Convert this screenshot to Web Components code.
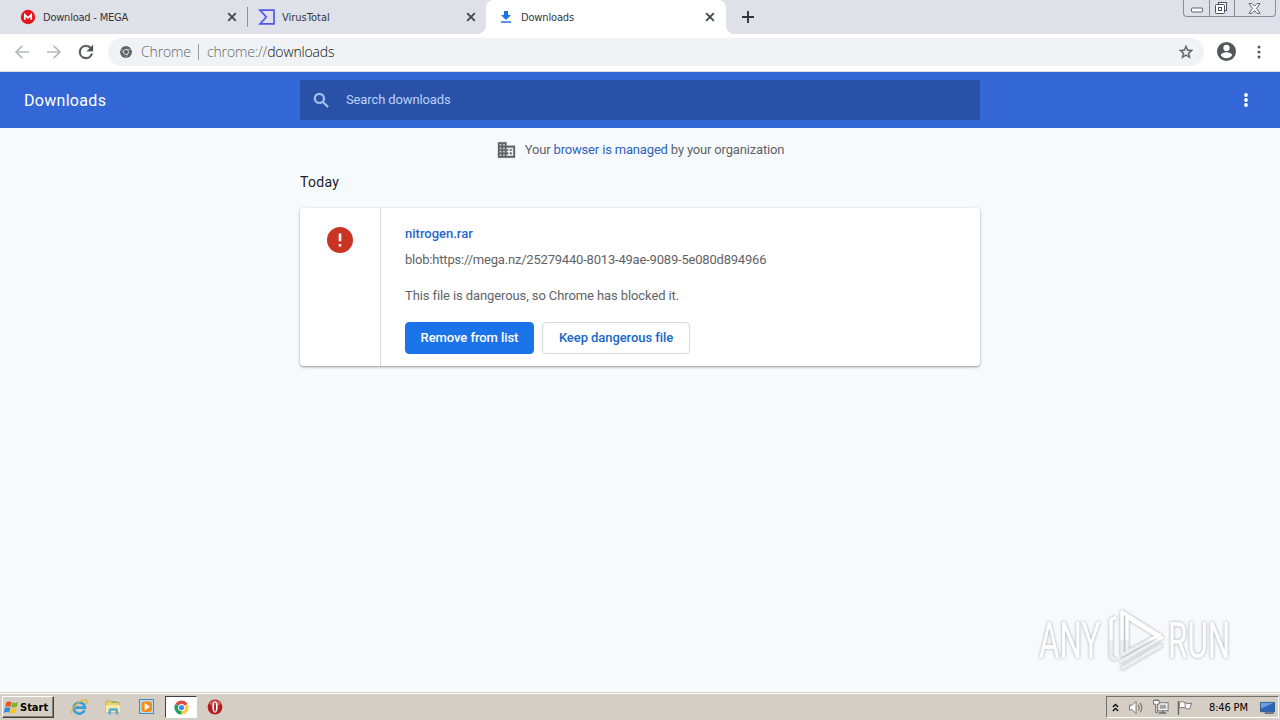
<!DOCTYPE html>
<html lang="en">
<head>
<meta charset="utf-8">
<title>Downloads</title>
<style>
  html, body { margin: 0; height: 100%; overflow: hidden; }
  body { font-family: Roboto, "Liberation Sans", sans-serif; font-size: 13px; }
</style>
</head>
<body>
<desktop-screen></desktop-screen>
<script>
// shared helper: open shadow root with markup
function define(name, html) {
  customElements.define(name, class extends HTMLElement {
    constructor() {
      super();
      this.attachShadow({ mode: "open" }).innerHTML = html;
    }
  });
}

const chromeLogo = (a, b, c, d, ring) => `
  <path d="M8 8 1.5 4.2A7.5 7.5 0 0 1 14.5 4.2Z" fill="${a}"/>
  <path d="M8 8 14.5 4.2A7.5 7.5 0 0 1 8 15.5Z" fill="${b}"/>
  <path d="M8 8V15.5A7.5 7.5 0 0 1 1.5 4.2Z" fill="${c}"/>
  <circle cx="8" cy="8" r="3.8" fill="${ring}"/>
  <circle cx="8" cy="8" r="2.8" fill="${d}"/>`;

const icons = {
  mega: ["0 0 16 16", `<circle cx="8" cy="8" r="7.2" fill="#e3141e"/><path d="M4.8 10.7V5.8L8 8.8l3.2-3v4.9" fill="none" stroke="#fff" stroke-width="1.7"/>`],
  virustotal: ["0 0 16 16", `<path d="M1 1.2H15V14.8H1L7.3 8Z" fill="none" stroke="#5057ee" stroke-width="1.7"/>`],
  download: ["0 0 10 12", `<path d="M3 0h4v4h3L5 8.9 0 4h3ZM0 10.3h10v1.5H0Z" fill="#1a73e8"/>`],
  close: ["0 0 10 10", `<path d="m1.2 1.2 7.6 7.6M8.8 1.2 1.2 8.8" stroke="#45494e" stroke-width="1.9"/>`],
  plus: ["0 0 12 12", `<path d="M6 0v12M0 6h12" stroke="#33363a" stroke-width="1.9"/>`],
  back: ["0 0 14 14", `<path d="M14 7H1.3M7.3.8 1.1 7l6.2 6.2" fill="none" stroke="#b6b8bb" stroke-width="1.7"/>`],
  forward: ["0 0 14 14", `<path d="M0 7h12.7M6.7.8 12.9 7l-6.2 6.2" fill="none" stroke="#b6b8bb" stroke-width="1.7"/>`],
  reload: ["4 4 16 16", `<path d="M17.65 6.35A7.96 7.96 0 0 0 12 4a8 8 0 1 0 7.73 10h-2.08A6 6 0 1 1 12 6c1.66 0 3.14.69 4.22 1.78L13 11h7V4l-2.35 2.35z" fill="#505357" stroke="#505357" stroke-width=".4"/>`],
  chromeGray: ["0 0 16 16", `<circle cx="8" cy="8" r="7.9" fill="#5f6368"/><circle cx="8" cy="8" r="3.4" fill="none" stroke="#f1f3f4" stroke-width="1"/><path d="M8 4.5h6.8M4.9 9.6 1.6 4M11.1 9.6 7.7 15.5" stroke="#f1f3f4" stroke-width=".7"/>`],
  star: ["2 2 20 20", `<path d="m22 9.24-7.19-.62L12 2 9.19 8.63 2 9.24l5.46 4.73L5.82 21 12 17.27 18.18 21l-1.63-7.03L22 9.24zM12 15.4l-3.76 2.27 1-4.28-3.32-2.88 4.38-.38L12 6.1l1.71 4.04 4.38.38-3.32 2.88 1 4.28L12 15.4z" fill="#5f6368" stroke="#5f6368" stroke-width=".6"/>`],
  person: ["2 2 20 20", `<path d="M12 2a10 10 0 1 0 0 20 10 10 0 0 0 0-20zm0 3a3.3 3.3 0 1 1 0 6.6A3.3 3.3 0 0 1 12 5zm0 14.2a7.2 7.2 0 0 1-6-3.22c.03-1.99 4-3.08 6-3.08s5.97 1.09 6 3.08a7.2 7.2 0 0 1-6 3.22z" fill="#53565a"/>`],
  dots: ["0 0 4 14", `<circle cx="2" cy="2" r="1.5"/><circle cx="2" cy="7" r="1.5"/><circle cx="2" cy="12" r="1.5"/>`],
  dotsBold: ["0 0 4 14", `<circle cx="2" cy="2" r="1.9"/><circle cx="2" cy="7" r="1.9"/><circle cx="2" cy="12" r="1.9"/>`],
  search: ["3 3 18 18", `<path d="M15.5 14h-.79l-.28-.27A6.47 6.47 0 0 0 16 9.5 6.5 6.5 0 1 0 9.5 16c1.61 0 3.09-.59 4.23-1.57l.27.28v.79l5 4.99L20.49 19l-4.99-5zm-6 0a4.5 4.5 0 1 1 0-9 4.5 4.5 0 0 1 0 9z" fill="#b3cdf7" stroke="#b3cdf7" stroke-width=".4"/>`],
  building: ["2 3 20 18", `<path d="M12 7V3H2v18h20V7H12zM6 19H4v-2h2v2zm0-4H4v-2h2v2zm0-4H4V9h2v2zm0-4H4V5h2v2zm4 12H8v-2h2v2zm0-4H8v-2h2v2zm0-4H8V9h2v2zm0-4H8V5h2v2zm10 12h-8v-2h2v-2h-2v-2h2v-2h-2V9h8v10zm-2-8h-2v2h2v-2zm0 4h-2v2h2v-2z" fill="#5f6368" stroke="#5f6368" stroke-width=".4"/>`],
  danger: ["2 2 20 20", `<path d="M12 2a10 10 0 1 0 0 20 10 10 0 0 0 0-20zm1 15h-2v-2h2v2zm0-4h-2V7h2v6z" fill="#c93424"/>`],
  minimize: ["0 0 14 6", `<rect x="1.5" y="1" width="11" height="4" rx="1" fill="#fff" stroke="#5c616c"/>`],
  restore: ["0 0 14 14", `<path d="M4.5 3.5v-2h8v8h-2" fill="#fff" stroke="#4d525d" stroke-width="1.1"/><rect x="1.5" y="3.5" width="9" height="9" rx="1" fill="#fff" stroke="#4d525d"/><rect x="4.5" y="6.5" width="3" height="3" fill="none" stroke="#4d525d"/>`],
  winClose: ["0 0 13 11", `<path d="M1 .6h3l2.5 2.6L9 .6h3L8.5 5.4 12 10.4H9L6.5 7.6 4 10.4H1L4.5 5.4Z" fill="#fff" stroke="#5c616c"/>`],
  windows: ["0 0 16 16", `<path d="M2.5 2.5Q5 .6 8.2 2.2L7 7.3Q4 6 1.2 7.6Z" fill="#e85523"/><path d="M9 2.5q3 1.4 6-.3l-1.3 5q-3 1.6-5.9.3Z" fill="#77b829"/><path d="M1 8.5q3-1.5 5.8-.2l-1.3 5Q2.5 12-.3 13.7Z" fill="#328dd8"/><path d="M7.6 8.6q3 1.3 5.9-.2l-1.3 5q-3 1.6-5.9.3Z" fill="#f8c51c"/>`],
  ie: ["0 0 18 18", `<path d="M14.6 12A5.6 5.6 0 1 1 14.9 9.6H5" fill="none" stroke="#36a0dc" stroke-width="2.6"/><path d="M2 16C-1.5 13.5 9.5 1 15.8 2c1.6.4 1.3 2.5.2 4.3" fill="none" stroke="#e9b62d" stroke-width="1.3"/>`],
  folder: ["0 0 18 18", `<path d="M2 3h5l1 1.5h7.5V14H2Z" fill="#ead06f" stroke="#c3a23d" stroke-width=".7"/><path d="M2 7.2h14V14H2Z" fill="#f8eba7"/><path d="M4.5 16.5V12q0-1.8 1.8-1.8h6q1.8 0 1.8 1.8v4.5h-2.6v-3.8H7.1v3.8Z" fill="#55acd8"/><path d="M8 4h5" stroke="#5dae5c"/>`],
  media: ["0 0 18 18", `<rect x="1.5" y="1.5" width="14" height="14" fill="#b9dbf3" stroke="#4b88ba"/><rect x="3.5" y="3.5" width="10.5" height="10.5" rx="3" fill="#f28d16"/><path d="M6.7 5v7.5l5.4-3.7Z" fill="#fff"/>`],
  chrome: ["0 0 16 16", chromeLogo("#dd4b3e", "#fdcd40", "#1ea260", "#4688f1", "#fff")],
  opera: ["0 0 16 16", `<circle cx="8" cy="8" r="7.4" fill="#b31c20"/><path d="M2 5a7 7 0 0 1 12 0Q8 8 2 5" fill="#d56260"/><ellipse cx="8" cy="8" rx="2.7" ry="5.8" fill="#fff"/><ellipse cx="8" cy="8" rx="1" ry="4.8" fill="#a92a2b"/>`],
  chevrons: ["0 0 8 10", `<path d="m1 4.5 3-3 3 3M1 9l3-3 3 3" fill="none" stroke="#000" stroke-width="1.5"/>`],
  volume: ["0 0 18 16", `<path d="M1.5 5.5h3l4-4v13l-4-4h-3Z" fill="#fff" stroke="#74726e"/><path d="M11 5q2 3 0 6M13 3q3.4 5 0 10" fill="none" stroke="#777571" stroke-width="1.2"/>`],
  network: ["0 0 17 17", `<rect x="5" y="4" width="11" height="8.5" fill="#fff" stroke="#6c6a66"/><rect x="7" y="6" width="7" height="4.5" fill="#a5a5a2"/><path d="M6 14.8h8M10.5 12.5v2" stroke="#6c6a66" stroke-width="1.5"/><path d="M.5 1.5h6v4h-2v9H2.8v-9H.5ZM2.2 0v2M4.8 0v2" fill="#fff" stroke="#6c6a66"/>`],
  flag: ["0 0 17 16", `<path d="M1.5 1v15" stroke="#6c6a66" stroke-width="1.5"/><path d="M2.5 2.2Q6 .8 8.7 3q3 1.8 6.8.3l-1.8 6Q11 10.2 8.2 8.3 5.3 7.2 2.5 9Z" fill="#fff" stroke="#74726e"/><path d="M8.7 3v5.3" stroke="#74726e"/>`],
  desktop: ["0 0 16 14", `<path d="M.5 1.5h15v10H.5Z" fill="#2866bd" stroke="#315683"/><path d="M1 2h14L1 8Z" fill="#679fdf"/><path d="M5 13h10" stroke="#405b7b" stroke-width="1.5"/>`],
};

class UiIcon extends HTMLElement {
  constructor() {
    super();
    this.attachShadow({ mode: "open" });
  }

  connectedCallback() {
    const [viewBox, body] = icons[this.getAttribute("name")];
    const width = this.getAttribute("w");
    const height = this.getAttribute("h") || width;
    this.shadowRoot.innerHTML = `
      <style>
        :host { display: block; flex: none; }
        svg { display: block; fill: currentColor; overflow: visible; }
      </style>
      <svg width="${width}" height="${height}" viewBox="${viewBox}">${body}</svg>`;
  }
}
customElements.define("ui-icon", UiIcon);

define("browser-tab", `
  <style>
    :host {
      display: flex;
      align-items: center;
      box-sizing: border-box;
      height: 34px;
      color: #33363b;
      font: 11px "DejaVu Sans Condensed", "DejaVu Sans", sans-serif;
      letter-spacing: var(--track, -0.2px);
    }
    :host([active]) { background: #fff; border-radius: 8px 8px 0 0; position: relative; }
    :host([active])::before, :host([active])::after {
      content: "";
      position: absolute;
      bottom: 0;
      width: 8px;
      height: 8px;
    }
    :host([active])::before { left: -8px; background: radial-gradient(circle at 0 0, transparent 7.5px, #fff 8px); }
    :host([active])::after { right: -8px; background: radial-gradient(circle at 100% 0, transparent 7.5px, #fff 8px); }
    .title { flex: 1; white-space: nowrap; }
  </style>
  <slot name="icon"></slot>
  <span class="title"><slot></slot></span>
  <ui-icon name="close" w="10"></ui-icon>
`);

define("window-buttons", `
  <style>
    :host {
      display: grid;
      grid-template-columns: 25px 25px 41px;
      box-sizing: border-box;
      width: 93px;
      height: 17px;
      margin: 0 4px 0 auto;
      border: 1px solid #888d99;
      border-top: 0;
      border-radius: 0 0 4px 4px;
      align-self: flex-start;
    }
    div { display: grid; place-items: center; box-sizing: border-box; height: 16px; }
    div + div { border-left: 1px solid #888d99; }
    .min { align-items: end; padding-bottom: 3px; }
    .max, .close { padding-right: 2px; }
  </style>
  <div class="min"><ui-icon name="minimize" w="14" h="6"></ui-icon></div>
  <div class="max"><ui-icon name="restore" w="14"></ui-icon></div>
  <div class="close"><ui-icon name="winClose" w="13" h="11"></ui-icon></div>
`);

define("tab-strip", `
  <style>
    :host { display: flex; height: 34px; background: #dee1e8; }
    .sep { width: 1px; height: 20px; margin: 7px 0 0 10px; background: #8c8f95; }
    .first { width: 237px; padding-left: 20px; --track: -0.22px; }
    .second { width: 228px; padding-left: 11px; --track: 0; }
    .third { width: 240px; padding: 0 11px 0 15px; margin-left: 10px; --track: -0.15px; }
    .first ui-icon { margin-right: 7px; }
    .second ui-icon { margin-right: 7px; }
    .third ui-icon { margin-right: 10px; }
    .plus { margin: 11px 0 0 16px; }
  </style>
  <browser-tab class="first"><ui-icon slot="icon" name="mega" w="16"></ui-icon>Download - MEGA</browser-tab>
  <div class="sep"></div>
  <browser-tab class="second"><ui-icon slot="icon" name="virustotal" w="16"></ui-icon>VirusTotal</browser-tab>
  <browser-tab class="third" active><ui-icon slot="icon" name="download" w="10" h="12"></ui-icon>Downloads</browser-tab>
  <ui-icon class="plus" name="plus" w="12"></ui-icon>
  <window-buttons></window-buttons>
`);

define("browser-toolbar", `
  <style>
    :host {
      display: flex;
      align-items: center;
      box-sizing: border-box;
      height: 38px;
      padding: 0 19px 2px 15px;
      background: #fff;
      border-bottom: 1px solid #dcdfe3;
    }
    .forward { margin-left: 18px; }
    .reload { margin-left: 18px; }
    .omnibox {
      flex: 1;
      display: flex;
      align-items: center;
      box-sizing: border-box;
      height: 28px;
      margin-left: 15px;
      padding: 0 11px 0 12px;
      border-radius: 14px;
      background: #f0f3f5;
      color: #63676c;
      font: 14px "Open Sans", "Noto Sans", sans-serif;
      font-weight: 300;
      white-space: nowrap;
    }
    .name { margin-left: 9px; width: 57px; letter-spacing: -0.15px; }
    .bar { width: 1px; height: 16px; margin-right: 8px; background: #999da2; }
    .url { flex: 1; letter-spacing: -0.15px; }
    b { font-weight: 300; color: #111; }
    .person { margin: 0 21px 0 13px; }
    .dots { color: #55585c; }
  </style>
  <ui-icon name="back" w="14"></ui-icon>
  <ui-icon class="forward" name="forward" w="14"></ui-icon>
  <ui-icon class="reload" name="reload" w="14"></ui-icon>
  <div class="omnibox">
    <ui-icon name="chromeGray" w="12"></ui-icon>
    <span class="name">Chrome</span><span class="bar"></span>
    <span class="url">chrome://<b>downloads</b></span>
    <ui-icon name="star" w="14"></ui-icon>
  </div>
  <ui-icon class="person" name="person" w="19"></ui-icon>
  <ui-icon class="dots" name="dots" w="4" h="14"></ui-icon>
`);

define("page-header", `
  <style>
    :host {
      display: grid;
      grid-template-columns: 276px 680px 1fr;
      align-items: center;
      height: 56px;
      padding: 0 32px 0 24px;
      box-sizing: border-box;
      background: #3367d6;
      color: #fff;
    }
    .title { font-size: 16px; letter-spacing: 0.3px; padding-top: 1px; }
    .search {
      display: flex;
      align-items: center;
      height: 40px;
      background: #2a51a8;
      color: #b9d2fa;
      letter-spacing: -0.12px;
      border-radius: 1px;
    }
    .search ui-icon { margin: 0 17px 0 14px; }
    .search span { padding-bottom: 1px; }
    .menu { justify-self: end; }
  </style>
  <div class="title">Downloads</div>
  <div class="search"><ui-icon name="search" w="15"></ui-icon><span>Search downloads</span></div>
  <ui-icon class="menu" name="dotsBold" w="4" h="14"></ui-icon>
`);

define("action-button", `
  <style>
    :host {
      display: flex;
      align-items: center;
      justify-content: center;
      box-sizing: border-box;
      height: 32px;
      border: 1px solid #d5d9de;
      border-radius: 4px;
      color: #1967c9;
      font-weight: 500;
      letter-spacing: -0.07px;
      white-space: nowrap;
    }
    :host([primary]) { border-color: #1a73e8; background: #1a73e8; color: #fff; }
  </style>
  <slot></slot>
`);

define("download-item", `
  <style>
    :host {
      display: grid;
      grid-template-columns: 81px 1fr;
      box-sizing: border-box;
      width: 680px;
      height: 158px;
      border-radius: 4px;
      background: #fff;
      box-shadow: 0 1px 2px rgba(60, 64, 67, 0.38), 0 1px 3px 1px rgba(60, 64, 67, 0.12);
      color: #5f6368;
      line-height: 20px;
    }
    .status { display: flex; justify-content: center; padding-top: 19px; border-right: 1px solid #d9dbde; }
    .details { padding: 16px 24px 0; }
    .name { color: #2767cb; font-weight: 500; }
    .url { margin-top: 6px; letter-spacing: -0.2px; white-space: nowrap; }
    .note { margin-top: 16px; letter-spacing: -0.1px; white-space: nowrap; }
    .actions { display: flex; gap: 8px; margin-top: 16px; }
    .remove { width: 129px; }
    .keep { width: 148px; }
  </style>
  <div class="status"><ui-icon name="danger" w="26"></ui-icon></div>
  <div class="details">
    <div class="name"><slot name="name"></slot></div>
    <div class="url"><slot name="url"></slot></div>
    <div class="note"><slot name="note"></slot></div>
    <div class="actions">
      <action-button class="remove" primary>Remove from list</action-button>
      <action-button class="keep">Keep dangerous file</action-button>
    </div>
  </div>
`);

// watermark floats over the lower right of the page
define("any-run-mark", `
  <style>
    :host {
      position: absolute;
      right: 44px;
      bottom: 18px;
      display: block;
    }
    svg { display: block; overflow: visible; filter: drop-shadow(0 0 1.5px rgba(105, 108, 112, 0.6)); }
    text { font: 50px Roboto, sans-serif; fill: url(#fade); }
    g { fill: none; stroke: url(#fade); stroke-width: 3.5; stroke-linejoin: round; }
  </style>
  <svg width="200" height="68" viewBox="1036 606 200 68">
    <defs>
      <linearGradient id="fade" gradientUnits="userSpaceOnUse" x1="0" y1="610" x2="0" y2="670">
        <stop offset="0.48" stop-color="#fff"/>
        <stop offset="0.52" stop-color="#eceef0"/>
      </linearGradient>
    </defs>
    <text transform="translate(1039 658) scale(0.63 1)">ANY</text>
    <g>
      <path d="M1116 617 1111 620V657L1116 660"/>
      <path d="M1160 636 1122 612V655L1128 652"/>
      <path d="M1159 637 1127 617V652L1161 634"/>
      <path d="M1120 662 1163 637M1121 669 1162 645"/>
    </g>
    <text transform="translate(1168 658) scale(0.63 1)">RUN</text>
  </svg>
`);

define("downloads-page", `
  <style>
    :host {
      display: flex;
      flex-direction: column;
      align-items: center;
      position: relative;
      height: 564px;
      background: #f7fafd;
    }
    .managed {
      display: flex;
      align-items: center;
      height: 20px;
      margin-top: 12px;
      padding-left: 2px;
      color: #5f6368;
      letter-spacing: -0.17px;
    }
    .managed ui-icon { margin-right: 10px; }
    .managed span { padding-bottom: 1px; }
    a { color: #2d63bb; }
    h2 {
      width: 680px;
      margin: 13px 0 16px;
      font-size: 14px;
      font-weight: 400;
      line-height: 19px;
      letter-spacing: 0.3px;
      color: #202124;
    }
  </style>
  <div class="managed"><ui-icon name="building" w="17" h="16"></ui-icon><span>Your <a>browser is managed</a> by your organization</span></div>
  <h2>Today</h2>
  <download-item>
    <span slot="name">nitrogen.rar</span>
    <span slot="url">blob:https://mega.nz/25279440-8013-49ae-9089-5e080d894966</span>
    <span slot="note">This file is dangerous, so Chrome has blocked it.</span>
  </download-item>
  <any-run-mark></any-run-mark>
`);

define("task-bar", `
  <style>
    :host {
      display: flex;
      align-items: center;
      box-sizing: border-box;
      height: 28px;
      padding: 1px 1px 0 2px;
      border-top: 1px solid #d5d1c9;
      box-shadow: inset 0 1px #fff;
      background: #d4cec5;
      color: #000;
      font: 11px "DejaVu Sans Condensed", "DejaVu Sans", sans-serif;
    }
    .start {
      display: flex;
      align-items: center;
      gap: 1px;
      box-sizing: border-box;
      width: 52px;
      height: 22px;
      padding-left: 1px;
      border: 1px solid;
      border-color: #fff #404040 #404040 #fff;
      box-shadow: inset -1px -1px #858078;
      font-weight: bold;
      letter-spacing: 0;
    }
    .apps { display: flex; align-items: center; margin-left: 16px; }
    .apps > ui-icon { margin-right: 16px; }
    .apps > ui-icon:last-child { margin: 0 0 0 -2px; }
    .open {
      display: grid;
      place-items: center;
      box-sizing: border-box;
      width: 32px;
      height: 22px;
      margin: 0 12px 0 -7px;
      border: 1px solid;
      border-color: #404040 #fff #fff #404040;
      background: #fff;
    }
    .tray {
      display: flex;
      align-items: center;
      box-sizing: border-box;
      width: 173px;
      height: 22px;
      margin-left: auto;
      padding-left: 5px;
      border: 1px solid;
      border-color: #777269 #fff #fff #777269;
    }
    .clock { margin: 0 11px 0 16px; width: 40px; white-space: nowrap; letter-spacing: -0.15px; }
  </style>
  <div class="start"><ui-icon name="windows" w="15"></ui-icon><span>Start</span></div>
  <div class="apps">
    <ui-icon name="ie" w="18"></ui-icon>
    <ui-icon name="folder" w="18"></ui-icon>
    <ui-icon name="media" w="18"></ui-icon>
    <div class="open"><ui-icon name="chrome" w="15"></ui-icon></div>
    <ui-icon name="opera" w="16"></ui-icon>
  </div>
  <div class="tray">
    <ui-icon name="chevrons" w="7" h="9"></ui-icon>
    <ui-icon name="volume" w="17" h="15" style="margin-left:9px"></ui-icon>
    <ui-icon name="network" w="16" style="margin-left:8px"></ui-icon>
    <ui-icon name="flag" w="16" h="15" style="margin-left:8px"></ui-icon>
    <span class="clock">8:46 PM</span>
    <ui-icon name="desktop" w="15" h="13"></ui-icon>
  </div>
`);

define("desktop-screen", `
  <style>
    :host { display: flex; flex-direction: column; width: 1280px; height: 720px; }
    :host > * { flex: none; }
    tab-strip, browser-toolbar, page-header, downloads-page, task-bar { flex: none; }
  </style>
  <tab-strip></tab-strip>
  <browser-toolbar></browser-toolbar>
  <page-header></page-header>
  <downloads-page></downloads-page>
  <task-bar></task-bar>
`);
</script>
</body>
</html>
